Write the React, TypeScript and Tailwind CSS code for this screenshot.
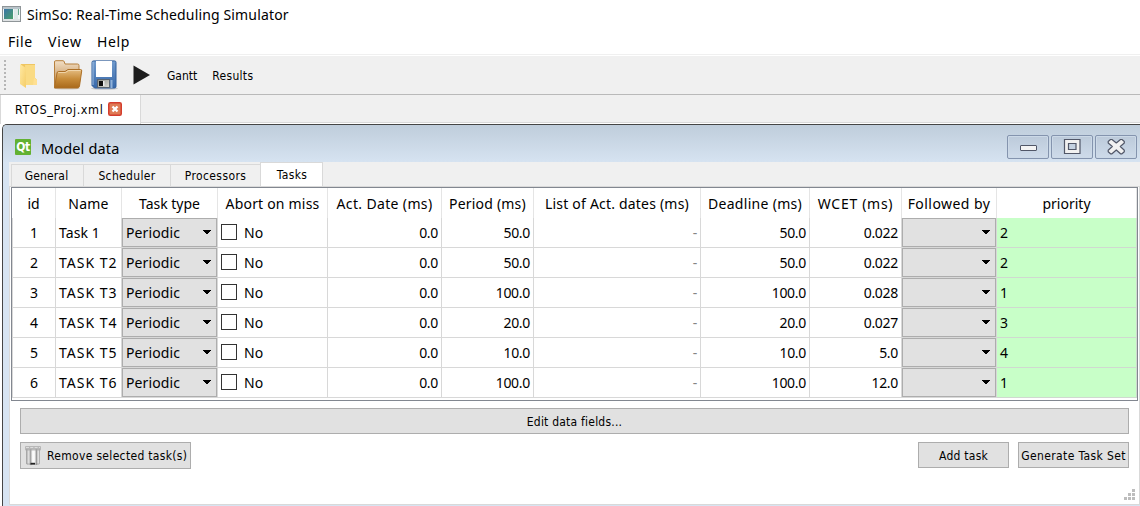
import React from "react";

const ui = "font-['Noto_Sans','Open_Sans',sans-serif]";
const tahoma = "font-['DejaVu_Sans_Condensed','DejaVu_Sans',sans-serif] [font-stretch:condensed]";

const columns = [
  { label: "id", track: "" },
  { label: "Name", track: "tracking-[0.2px]" },
  { label: "Task type", track: "" },
  { label: "Abort on miss", track: "tracking-[0.2px]" },
  { label: "Act. Date (ms)", track: "tracking-[0.35px]" },
  { label: "Period (ms)", track: "tracking-[0.2px]" },
  { label: "List of Act. dates (ms)", track: "tracking-[0.2px]" },
  { label: "Deadline (ms)", track: "tracking-[0.3px]" },
  { label: "WCET (ms)", track: "tracking-[0.7px]" },
  { label: "Followed by", track: "tracking-[0.45px]" },
  { label: "priority", track: "" },
];

const tasks = [
  { id: 1, name: "Task 1", period: "50.0", deadline: "50.0", wcet: "0.022", priority: 2 },
  { id: 2, name: "TASK T2", period: "50.0", deadline: "50.0", wcet: "0.022", priority: 2 },
  { id: 3, name: "TASK T3", period: "100.0", deadline: "100.0", wcet: "0.028", priority: 1 },
  { id: 4, name: "TASK T4", period: "20.0", deadline: "20.0", wcet: "0.027", priority: 3 },
  { id: 5, name: "TASK T5", period: "10.0", deadline: "10.0", wcet: "5.0", priority: 4 },
  { id: 6, name: "TASK T6", period: "100.0", deadline: "100.0", wcet: "12.0", priority: 1 },
];

const grid = "grid grid-cols-[44px_66px_96px_110px_114px_92px_167px_109px_92px_95px_140px]";
const cell = "flex items-center border-r border-b border-[#d8d8d8] whitespace-nowrap";
const num = `${cell} justify-end pr-[3px] tracking-[-0.3px]`;

function Combo({ text }: { text?: string }) {
  return (
    <div className="flex items-center border-r border-b border-[#d8d8d8]">
      <button className="flex h-[29px] w-full items-center justify-between border border-[#adadad] bg-[#e1e1e1] pl-[3px] pr-[5px] tracking-[0.1px]">
        <span>{text}</span>
        <svg className="mb-[2px]" width="8" height="4" viewBox="0 0 8 4" shapeRendering="crispEdges"><path d="M0 0H8V1H7V2H6V3H5V4H3V3H2V2H1V1H0Z" fill="#000" /></svg>
      </button>
    </div>
  );
}

function AppIcon() {
  return (
    <svg width="19" height="16" viewBox="0 0 19 16">
      <defs><linearGradient id="app" x2="1" y2="1"><stop stopColor="#3b74a8" /><stop offset="1" stopColor="#4aa06a" /></linearGradient></defs>
      <rect x=".5" y=".5" width="18" height="15" fill="#f4f6f7" stroke="#8f9598" />
      <rect x="1" y="1" width="17" height="2" fill="#b9c4ca" />
      <rect x="2" y="3" width="9" height="10" fill="url(#app)" />
      <rect x="12" y="3" width="4" height="10" fill="#dfe9e9" />
      <rect x="16" y="3" width="1" height="6" fill="#67a98e" />
      <rect x="1" y="13" width="17" height="2" fill="#dfe2e4" />
    </svg>
  );
}

function NewIcon() {
  return (
    <svg width="20" height="26" viewBox="0 0 20 26">
      <defs><linearGradient id="nf" x2="1" y2="1"><stop stopColor="#ffe9a3" /><stop offset="1" stopColor="#f5cd68" /></linearGradient></defs>
      <path d="M2 1H16V15L18 17V22H5L2 19Z" fill="#efc662" />
      <path d="M6 2H16V15L18 17V22H7Z" fill="#fadb84" />
      <path d="M1 1L7 5V25L1 21Z" fill="url(#nf)" />
      <path d="M15 15L18 17V22H14Z" fill="#ffe092" />
    </svg>
  );
}

function OpenIcon() {
  return (
    <svg width="30" height="30" viewBox="0 0 30 30">
      <defs>
        <linearGradient id="ob" x2="0" y2="1"><stop stopColor="#f2dfc6" /><stop offset="1" stopColor="#b9803b" /></linearGradient>
        <linearGradient id="of" x2="0" y2="1"><stop stopColor="#e5bd82" /><stop offset=".5" stopColor="#c88d3b" /><stop offset="1" stopColor="#a9691b" /></linearGradient>
      </defs>
      <ellipse cx="14" cy="28.3" rx="13" ry="1.2" fill="#cfcbc5" />
      <path d="M1.5 27V2Q1.500 .7 2.700 .7H10Q11 .7 11.300 2L12 4H24.500Q26 4 26 5.500V26Z" fill="url(#ob)" stroke="#b7803d" />
      <path d="M1.500 28L4 13Q4.200 11.500 5.500 11.500H12L15 9.500H27.500Q29 9.500 28.700 11L26.500 26Q26.200 28 24.500 28Z" fill="url(#of)" stroke="#ad7027" />
      <path d="M5 13Q5.200 12.500 6 12.500H12.500L15.500 10.500H27.500" fill="none" stroke="#f4ddb8" strokeWidth=".8" />
    </svg>
  );
}

function SaveIcon() {
  return (
    <svg width="28" height="30" viewBox="0 0 28 30">
      <defs>
        <linearGradient id="sv" x2="0" y2="1"><stop stopColor="#719bcd" /><stop offset="1" stopColor="#3768a9" /></linearGradient>
        <linearGradient id="sh" x2="1" y2="1"><stop stopColor="#8d8f88" /><stop offset="1" stopColor="#deded8" /></linearGradient>
      </defs>
      <ellipse cx="13.500" cy="28.500" rx="13.500" ry="1.300" fill="#c7c8ca" />
      <path d="M2.500 .9H23.500Q25 .9 25 2.400V26.500Q25 28 23.500 28H3.500L1 25.500V2.400Q1 .9 2.500 .9Z" fill="url(#sv)" stroke="#315f9c" />
      <path d="M2 2V25" stroke="#9dbce0" />
      <rect x="5" y="1" width="16" height="16" fill="#fff" />
      <rect x="6.500" y="19.500" width="12" height="8" fill="url(#sh)" stroke="#576472" />
      <rect x="8" y="21" width="4" height="5" fill="#111" />
      <rect x="12" y="21" width="1.500" height="5" fill="#eee" />
      <rect x="19.500" y="20" width="2" height="8" fill="#8fb1d9" />
    </svg>
  );
}

function TrashIcon() {
  return (
    <svg width="16" height="20" viewBox="0 0 16 20">
      <defs><linearGradient id="tr"><stop stopColor="#9a9a9a" /><stop offset=".2" stopColor="#e6e6e6" /><stop offset=".32" stopColor="#a2a2a2" /><stop offset=".48" stopColor="#fff" /><stop offset=".62" stopColor="#f4f4f4" /><stop offset=".75" stopColor="#999" /><stop offset=".87" stopColor="#eee" /><stop offset="1" stopColor="#9c9c9c" /></linearGradient></defs>
      <path d="M1 3H15V18Q8 20.500 1 18Z" fill="url(#tr)" />
      <rect x="0" y="0" width="16" height="4.500" rx="1" fill="#a8a8a8" fillOpacity=".75" />
      <path d="M1 1.500H15" stroke="#ddd" strokeDasharray="3 1.300" />
      <path d="M2 18H14" stroke="#888" strokeOpacity=".6" />
      <rect x="5.500" y="16.800" width="4.500" height="1.800" fill="#222" />
    </svg>
  );
}

function WindowButton({ kind }: { kind: "min" | "max" | "close" }) {
  return (
    <button className="flex h-6 w-[42px] items-center justify-center rounded-[2px] border border-[#8494ae] bg-gradient-to-b from-[#bccada] to-[#cedbea] shadow-[inset_0_0_0_1px_#ccd9e7]">
      {kind === "min" && <svg className="-ml-px" width="18" height="18"><rect x="1.500" y="7.500" width="16" height="5" rx=".5" fill="#f4f4f4" stroke="#515768" /></svg>}
      {kind === "max" && <svg className="-ml-px" width="18" height="18"><path fillRule="evenodd" d="M1.500 1.500H17V15.500H1.500ZM5.500 5.500V11.500H13V5.500Z" fill="#f1f1f1" stroke="#515768" strokeWidth="1.200" /></svg>}
      {kind === "close" && <svg className="-ml-px" width="18" height="18"><path d="M3.500 1.500H5L9.300 5L13.500 1.500H15L17.300 3.500V5L13.300 8.500L17.300 12.200V13.700L15 15.800H13.500L9.300 12L5 15.800H3.500L1.200 13.700V12.200L5.300 8.500L1.200 5V3.500Z" fill="#f1f1f1" stroke="#515768" strokeWidth="1.200" strokeLinejoin="round" /></svg>}
    </button>
  );
}

export default function App() {
  return (
    <div className={`flex h-[506px] w-[1140px] flex-col overflow-hidden bg-white text-[14px] leading-5 text-black ${ui}`}>
      <header className="flex h-7 shrink-0 items-center gap-[6px] pl-[2px]">
        <AppIcon />
        <span className="pt-px tracking-[0.15px]">SimSo: Real-Time Scheduling Simulator</span>
      </header>
      <nav className="flex h-[26px] shrink-0 items-center pl-2 pt-px">
        <span className="w-10 tracking-[0.6px]">File</span><span className="w-[49px] tracking-[0.8px]">View</span><span className="tracking-[0.6px]">Help</span>
      </nav>
      <div className="h-px shrink-0 bg-[#f0f0f0]" />
      <div className={`mt-px flex h-[39px] shrink-0 items-center border-b border-b-[#b9b9b9] bg-[#f0f0f0] text-[12px] ${tahoma}`}>
        <div className="ml-1 flex h-[31px] w-[2px] flex-col justify-between">
          {Array.from({ length: 8 }, (_, i) => <i key={i} className="h-[2px] w-[2px] bg-[#b6b6b6]" />)}
        </div>
        <div className="ml-[13px] mt-[2px]"><NewIcon /></div>
        <div className="ml-[14px]"><OpenIcon /></div>
        <div className="ml-[8px]"><SaveIcon /></div>
        <svg className="ml-[14px] -mt-px" width="18" height="20"><path d="M.5 .5L17 10L.5 19.500Z" fill="#1d1d1d" /></svg>
        <span className="ml-4 mt-[2px]">Gantt</span>
        <span className="ml-[15px] mt-[2px] tracking-[0.3px]">Results</span>
      </div>
      <div className={`flex h-[29px] shrink-0 text-[12px] ${tahoma}`}>
        <div className="flex w-[141px] items-center border-r border-l border-[#d9d9d9] pl-[14px]">
          <span className="w-[87px] text-[12.5px] tracking-[0.6px]">RTOS_Proj.xml</span>
          <svg className="ml-[6px] -mt-px" width="14" height="14"><rect x=".75" y=".75" width="12.500" height="12.500" rx="1.500" fill="#df7b55" stroke="#d43d2d" strokeWidth="1.500" /><path d="M4.500 4.500L9.500 9.500M9.500 4.500L4.500 9.500" stroke="#fff" strokeWidth="2.300" /></svg>
        </div>
        <div className="h-[28px] flex-1 border-b border-[#d9d9d9] bg-[#f0f0f0]" />
      </div>
      <section className="ml-[2px] flex h-[382px] shrink-0 flex-col rounded-tl-[5px] border-t border-l border-[#454545] bg-[#d7e4f2]">
        <div className="flex h-[37px] shrink-0 items-center rounded-tl-[4px] bg-gradient-to-b from-[#bfcddb] to-[#d6e3f1] pl-3 pr-[3px]">
          <div className="mt-[7px] flex h-4 w-4 items-center justify-center rounded-[1px] bg-[#62b132] font-['DejaVu_Sans_Condensed','DejaVu_Sans',sans-serif] text-[12px] font-semibold tracking-[-0.5px] text-white">Qt</div>
          <span className="ml-[10px] mt-[9px] text-[14.5px] tracking-[0.15px]">Model data</span>
          <div className="ml-auto mt-[6px] flex gap-[2px]"><WindowButton kind="min" /><WindowButton kind="max" /><WindowButton kind="close" /></div>
        </div>
        <div className="ml-[6px] flex h-[343px] flex-col border-b border-[#d9d9d9] bg-[#f0f0f0]">
          <div className={`flex h-[24px] shrink-0 items-end pl-[2px] text-[12px] ${tahoma}`}>
            <div className="flex h-[22px] w-[72px] items-center justify-center border-t border-l border-[#d9d9d9] pr-[2px] tracking-[0.15px]">General</div>
            <div className="flex h-[22px] w-[87px] items-center justify-center border-t border-l border-[#d9d9d9] tracking-[0.35px]">Scheduler</div>
            <div className="flex h-[22px] w-[90px] items-center justify-center border-t border-l border-[#d9d9d9] tracking-[0.4px]">Processors</div>
            <div className="flex h-[24px] w-[63px] items-center justify-center border-t border-r border-l border-[#d9d9d9] bg-white pl-px tracking-[0.4px]">Tasks</div>
          </div>
          <div className="flex flex-1 flex-col border border-b-0 border-[#d9d9d9] bg-white">
            <div className="ml-px flex h-[214px] w-[1127px] flex-col border border-[#828790]">
              <div className={`${grid} h-[30px]`}>
                {columns.map((c) => <div key={c.label} className={`flex items-center justify-center whitespace-nowrap border-r border-[#e5e5e5] pt-[2px] ${c.track}`}>{c.label}</div>)}
              </div>
              {tasks.map((t) => (
                <div key={t.id} className={`${grid} h-[30px]`}>
                  <div className={`${cell} justify-center border-l`}>{t.id}</div>
                  <div className={`${cell} pl-[3px] ${t.id > 1 ? "tracking-[1px]" : "tracking-[0.1px]"}`}>{t.name}</div>
                  <Combo text="Periodic" />
                  <div className={`${cell} gap-[7px] pl-[3px]`}><i className="mb-px h-4 w-4 border border-[#333]" />No</div>
                  <div className={num}>0.0</div>
                  <div className={num}>{t.period}</div>
                  <div className={`${num} text-[#858585]`}>-</div>
                  <div className={num}>{t.deadline}</div>
                  <div className={num}>{t.wcet}</div>
                  <Combo />
                  <div className="flex items-center border-r border-b border-[#d0d9d0] bg-[#c8ffc8] pl-[3px]">{t.priority}</div>
                </div>
              ))}
            </div>
            <div className={`flex flex-col px-[10px] pt-[7px] text-[12px] ${tahoma}`}>
              <button className="flex h-[26px] w-[1109px] items-center justify-center border border-[#adadad] bg-[#e1e1e1] pt-px tracking-[0.22px]">Edit data fields...</button>
              <div className="mt-2 flex w-[1109px] items-start">
                <button className="flex h-[27px] w-[171px] items-center whitespace-nowrap border border-[#adadad] bg-[#e1e1e1] pl-1"><TrashIcon /><span className="ml-[6px] tracking-[0.32px]">Remove selected task(s)</span></button>
                <button className="ml-auto h-[26px] w-[91px] border border-[#adadad] bg-[#e1e1e1] pt-px tracking-[0.25px]">Add task</button>
                <button className="ml-[9px] h-[26px] w-[111px] whitespace-nowrap border border-[#adadad] bg-[#e1e1e1] pt-px tracking-[0.38px]">Generate Task Set</button>
              </div>
            </div>
            <svg className="mt-auto mb-[4px] ml-auto mr-[4px]" width="11" height="11" fill="#bdbdbd"><path d="M8 0h3v3h-3zM4 4h3v3h-3zM8 4h3v3h-3zM0 8h3v3h-3zM4 8h3v3h-3zM8 8h3v3h-3z" /></svg>
          </div>
        </div>
      </section>
    </div>
  );
}
